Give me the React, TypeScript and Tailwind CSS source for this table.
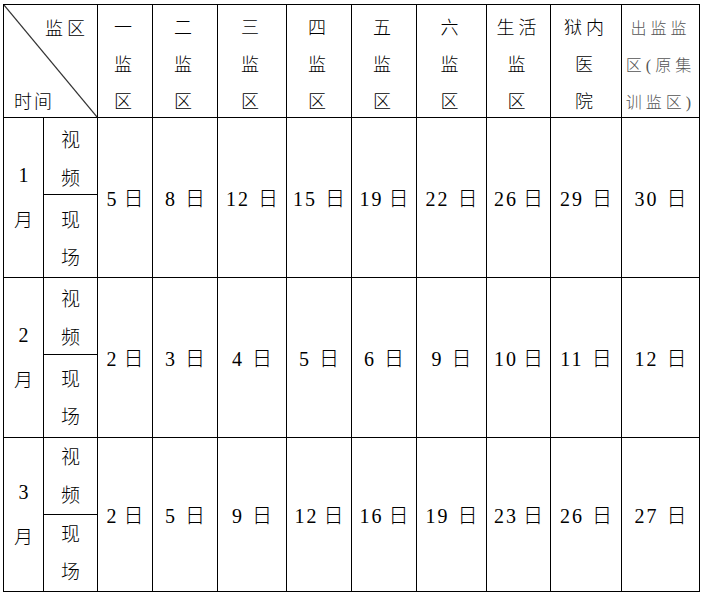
import { Fragment } from 'react';

const font = 'font-["Liberation_Serif","Noto_Sans_CJK_SC",serif]';

const headers: { lines: string[]; gray?: boolean }[] = [
  { lines: ['一', '监', '区'] },
  { lines: ['二', '监', '区'] },
  { lines: ['三', '监', '区'] },
  { lines: ['四', '监', '区'] },
  { lines: ['五', '监', '区'] },
  { lines: ['六', '监', '区'] },
  { lines: ['生活', '监', '区'] },
  { lines: ['狱内', '医', '院'] },
  { lines: ['出监监', '区(原集', '训监区)'], gray: true },
];

// [number, wide gap before 日]
type Day = [string, boolean];

const months: { month: string; top: string; bottom: string; shift: string; days: Day[] }[] = [
  {
    month: '1',
    top: 'h-[76px]',
    bottom: 'h-[83px]',
    shift: 'translate-y-[4px]',
    days: [['5', false], ['8', true], ['12', true], ['15', true], ['19', false], ['22', true], ['26', false], ['29', true], ['30', true]],
  },
  {
    month: '2',
    top: 'h-[76px]',
    bottom: 'h-[83px]',
    shift: 'translate-y-[3px]',
    days: [['2', false], ['3', true], ['4', true], ['5', true], ['6', true], ['9', true], ['10', false], ['11', true], ['12', true]],
  },
  {
    month: '3',
    top: 'h-[76px]',
    bottom: 'h-[76px]',
    shift: 'translate-y-[1px]',
    days: [['2', false], ['5', true], ['9', true], ['12', false], ['16', false], ['19', true], ['23', false], ['26', true], ['27', true]],
  },
];

const widths = ['w-[40px]', 'w-[54px]', 'w-[55px]', 'w-[65px]', 'w-[69px]', 'w-[65px]', 'w-[65px]', 'w-[70px]', 'w-[64px]', 'w-[71px]', 'w-[78px]'];

const cell = 'border border-black p-0 text-center align-middle overflow-hidden';

export default function App() {
  return (
    <div className={`bg-white w-[704px] h-[594px] pt-[4px] pl-[3px] ${font} font-light text-black`}>
      <table className="table-fixed border-collapse w-[697px]">
        <colgroup>
          {widths.map((w, i) => (
            <col key={i} className={w} />
          ))}
        </colgroup>
        <tbody>
          <tr>
            <td colSpan={2} className="relative border border-black p-0 align-top h-[113px]">
              <svg className="absolute inset-0 w-full h-full" preserveAspectRatio="none" viewBox="0 0 100 100">
                <line x1="0" y1="0" x2="100" y2="100" stroke="#333" strokeWidth="1.2" vectorEffect="non-scaling-stroke" />
              </svg>
              <div className="flex flex-col justify-between h-[112px] pt-[12px] pb-[3px] text-[18px] leading-[24px]">
                <div className="self-end pr-[8px] tracking-[4px]">监区</div>
                <div className="self-start pl-[10px] tracking-[2px]">时间</div>
              </div>
            </td>
            {headers.map((h, i) => (
              <td key={i} className="border border-black p-0 text-center align-top h-[113px]">
                <div className={h.gray ? 'h-[112px] overflow-hidden pt-[5px] text-[16px] leading-[37px] tracking-[4px] text-[#555]' : 'h-[112px] overflow-hidden pt-[5px] text-[18px] leading-[37px] tracking-[4px]'}>
                  {h.lines.map((l, j) => (
                    <div key={j}>{l}</div>
                  ))}
                </div>
              </td>
            ))}
          </tr>
          {months.map((m) => (
            <Fragment key={m.month}>
              <tr>
                <td rowSpan={2} className={`${cell} text-[20px] leading-[45px]`}>
                  <div>{m.month}</div>
                  <div className="text-[19px]">月</div>
                </td>
                <td className={`${cell} ${m.top} text-[19px] leading-[38px]`}>
                  <div className={m.shift}>
                    <div>视</div>
                    <div>频</div>
                  </div>
                </td>
                {m.days.map(([n, wide], i) => (
                  <td key={i} rowSpan={2} className={`${cell} pt-[3px] text-[20px] whitespace-nowrap`}>
                    <span className="tracking-[2px]">{n}</span>
                    <span className={wide ? 'ml-[8px]' : 'ml-[5px]'}>日</span>
                  </td>
                ))}
              </tr>
              <tr>
                <td className={`${cell} ${m.bottom} text-[19px] leading-[38px]`}>
                  <div className={m.shift}>
                    <div>现</div>
                    <div>场</div>
                  </div>
                </td>
              </tr>
            </Fragment>
          ))}
        </tbody>
      </table>
    </div>
  );
}
